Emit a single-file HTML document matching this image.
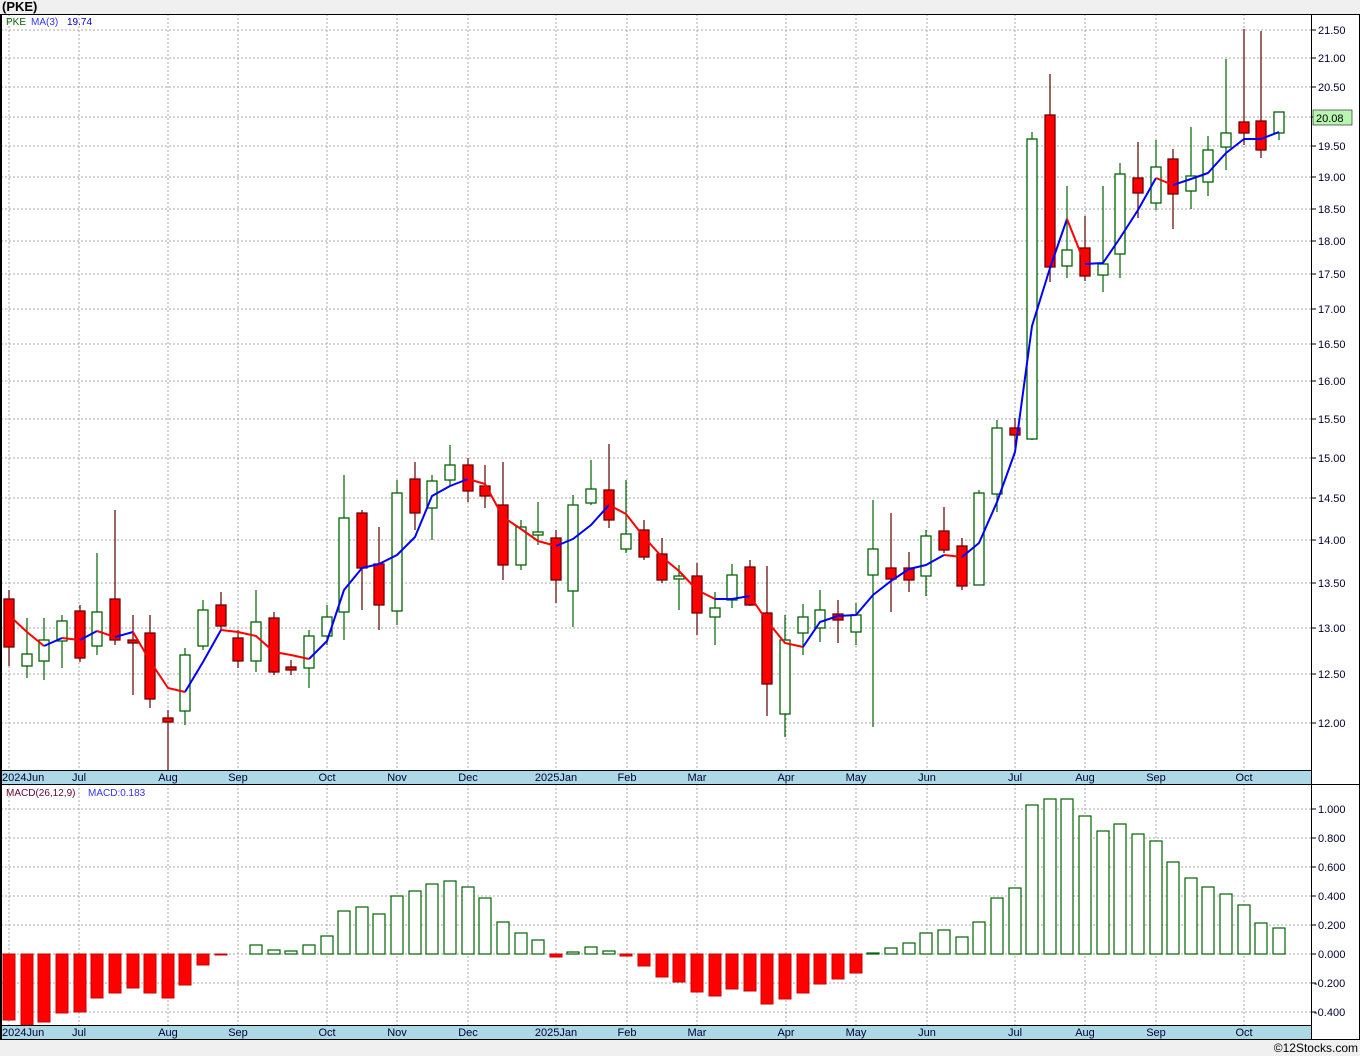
<!DOCTYPE html>
<html><head><meta charset="utf-8"><style>
html,body{margin:0;padding:0;background:#f0f0f0;}
svg{display:block;font-family:"Liberation Sans","DejaVu Sans",sans-serif;}
.g line{stroke:#a8a8a8;stroke-dasharray:2,2;stroke-width:1}
.u line{stroke:#006400;stroke-width:1.2}
.u rect{fill:#fff;stroke:#006400;stroke-width:1.3}
.d line{stroke:#600000;stroke-width:1.2}
.d rect{fill:#ff0000;stroke:#700000;stroke-width:1.3}
.ax text{font-size:11px;fill:#000033}
.mb rect.p{fill:#fff;stroke:#006400;stroke-width:1.2}
.mb rect.n{fill:#ff0000;stroke:#cc0000;stroke-width:1}
</style></head><body>
<svg width="1360" height="1056" viewBox="0 0 1360 1056" xmlns="http://www.w3.org/2000/svg">
<rect width="1360" height="1056" fill="#f0f0f0"/>
<text x="2" y="11" font-size="13" font-weight="bold" fill="#000">(PKE)</text>
<rect x="1" y="14" width="1310" height="756" fill="#fff"/>
<rect x="1" y="784" width="1310" height="241" fill="#fff"/>
<rect x="1311" y="14" width="49" height="1026" fill="#fff"/>
<rect x="1" y="770" width="1310" height="14" fill="#add8e6"/>
<rect x="1" y="1025" width="1310" height="14" fill="#add8e6"/>
<g class="g">
<line x1="1" x2="1311" y1="30" y2="30"/><line x1="1" x2="1311" y1="58" y2="58"/><line x1="1" x2="1311" y1="87" y2="87"/><line x1="1" x2="1311" y1="117" y2="117"/><line x1="1" x2="1311" y1="146" y2="146"/><line x1="1" x2="1311" y1="177" y2="177"/><line x1="1" x2="1311" y1="209" y2="209"/><line x1="1" x2="1311" y1="241" y2="241"/><line x1="1" x2="1311" y1="274" y2="274"/><line x1="1" x2="1311" y1="309" y2="309"/><line x1="1" x2="1311" y1="344" y2="344"/><line x1="1" x2="1311" y1="381" y2="381"/><line x1="1" x2="1311" y1="419" y2="419"/><line x1="1" x2="1311" y1="458" y2="458"/><line x1="1" x2="1311" y1="498" y2="498"/><line x1="1" x2="1311" y1="540" y2="540"/><line x1="1" x2="1311" y1="583" y2="583"/><line x1="1" x2="1311" y1="628" y2="628"/><line x1="1" x2="1311" y1="674" y2="674"/><line x1="1" x2="1311" y1="723" y2="723"/>
<line x1="1" x2="1311" y1="809" y2="809"/><line x1="1" x2="1311" y1="838" y2="838"/><line x1="1" x2="1311" y1="867" y2="867"/><line x1="1" x2="1311" y1="896" y2="896"/><line x1="1" x2="1311" y1="925" y2="925"/><line x1="1" x2="1311" y1="954" y2="954"/><line x1="1" x2="1311" y1="983" y2="983"/><line x1="1" x2="1311" y1="1012" y2="1012"/>
<line x1="9" x2="9" y1="14" y2="770"/><line x1="79" x2="79" y1="14" y2="770"/><line x1="168" x2="168" y1="14" y2="770"/><line x1="238" x2="238" y1="14" y2="770"/><line x1="327" x2="327" y1="14" y2="770"/><line x1="397" x2="397" y1="14" y2="770"/><line x1="468" x2="468" y1="14" y2="770"/><line x1="556" x2="556" y1="14" y2="770"/><line x1="627" x2="627" y1="14" y2="770"/><line x1="697" x2="697" y1="14" y2="770"/><line x1="786" x2="786" y1="14" y2="770"/><line x1="856" x2="856" y1="14" y2="770"/><line x1="927" x2="927" y1="14" y2="770"/><line x1="1015" x2="1015" y1="14" y2="770"/><line x1="1085" x2="1085" y1="14" y2="770"/><line x1="1156" x2="1156" y1="14" y2="770"/><line x1="1244" x2="1244" y1="14" y2="770"/>
<line x1="9" x2="9" y1="784" y2="1025"/><line x1="79" x2="79" y1="784" y2="1025"/><line x1="168" x2="168" y1="784" y2="1025"/><line x1="238" x2="238" y1="784" y2="1025"/><line x1="327" x2="327" y1="784" y2="1025"/><line x1="397" x2="397" y1="784" y2="1025"/><line x1="468" x2="468" y1="784" y2="1025"/><line x1="556" x2="556" y1="784" y2="1025"/><line x1="627" x2="627" y1="784" y2="1025"/><line x1="697" x2="697" y1="784" y2="1025"/><line x1="786" x2="786" y1="784" y2="1025"/><line x1="856" x2="856" y1="784" y2="1025"/><line x1="927" x2="927" y1="784" y2="1025"/><line x1="1015" x2="1015" y1="784" y2="1025"/><line x1="1085" x2="1085" y1="784" y2="1025"/><line x1="1156" x2="1156" y1="784" y2="1025"/><line x1="1244" x2="1244" y1="784" y2="1025"/>
</g>
<g class="d"><line x1="9" x2="9" y1="590" y2="666"/><rect x="4" y="599" width="10" height="48"/></g>
<g class="u"><line x1="27" x2="27" y1="618" y2="678"/><rect x="22" y="654" width="10" height="12"/></g>
<g class="u"><line x1="44" x2="44" y1="618" y2="680"/><rect x="39" y="640" width="10" height="21"/></g>
<g class="u"><line x1="62" x2="62" y1="615" y2="668"/><rect x="57" y="621" width="10" height="20"/></g>
<g class="d"><line x1="80" x2="80" y1="605" y2="662"/><rect x="75" y="611" width="10" height="47"/></g>
<g class="u"><line x1="97" x2="97" y1="553" y2="655"/><rect x="92" y="612" width="10" height="34"/></g>
<g class="d"><line x1="115" x2="115" y1="510" y2="645"/><rect x="110" y="599" width="10" height="41"/></g>
<g class="d"><line x1="133" x2="133" y1="615" y2="695"/><rect x="128" y="640" width="10" height="3"/></g>
<g class="d"><line x1="150" x2="150" y1="615" y2="708"/><rect x="145" y="633" width="10" height="66"/></g>
<g class="d"><line x1="168" x2="168" y1="710" y2="770"/><rect x="163" y="718" width="10" height="4"/></g>
<g class="u"><line x1="185" x2="185" y1="648" y2="725"/><rect x="180" y="655" width="10" height="56"/></g>
<g class="u"><line x1="203" x2="203" y1="600" y2="650"/><rect x="198" y="610" width="10" height="36"/></g>
<g class="d"><line x1="221" x2="221" y1="592" y2="630"/><rect x="216" y="605" width="10" height="21"/></g>
<g class="d"><line x1="238" x2="238" y1="630" y2="668"/><rect x="233" y="638" width="10" height="23"/></g>
<g class="u"><line x1="256" x2="256" y1="590" y2="672"/><rect x="251" y="622" width="10" height="39"/></g>
<g class="d"><line x1="274" x2="274" y1="612" y2="675"/><rect x="269" y="618" width="10" height="54"/></g>
<g class="d"><line x1="291" x2="291" y1="660" y2="675"/><rect x="286" y="667" width="10" height="3"/></g>
<g class="u"><line x1="309" x2="309" y1="630" y2="688"/><rect x="304" y="636" width="10" height="32"/></g>
<g class="u"><line x1="327" x2="327" y1="605" y2="645"/><rect x="322" y="617" width="10" height="19"/></g>
<g class="u"><line x1="344" x2="344" y1="475" y2="640"/><rect x="339" y="518" width="10" height="94"/></g>
<g class="d"><line x1="362" x2="362" y1="510" y2="610"/><rect x="357" y="513" width="10" height="55"/></g>
<g class="d"><line x1="379" x2="379" y1="527" y2="630"/><rect x="374" y="564" width="10" height="41"/></g>
<g class="u"><line x1="397" x2="397" y1="480" y2="625"/><rect x="392" y="493" width="10" height="118"/></g>
<g class="d"><line x1="415" x2="415" y1="462" y2="530"/><rect x="410" y="479" width="10" height="34"/></g>
<g class="u"><line x1="432" x2="432" y1="475" y2="540"/><rect x="427" y="481" width="10" height="27"/></g>
<g class="u"><line x1="450" x2="450" y1="445" y2="485"/><rect x="445" y="465" width="10" height="15"/></g>
<g class="d"><line x1="468" x2="468" y1="458" y2="502"/><rect x="463" y="465" width="10" height="26"/></g>
<g class="d"><line x1="485" x2="485" y1="465" y2="508"/><rect x="480" y="486" width="10" height="10"/></g>
<g class="d"><line x1="503" x2="503" y1="462" y2="580"/><rect x="498" y="505" width="10" height="60"/></g>
<g class="u"><line x1="521" x2="521" y1="520" y2="570"/><rect x="516" y="527" width="10" height="38"/></g>
<g class="u"><line x1="538" x2="538" y1="502" y2="545"/><rect x="533" y="532" width="10" height="3"/></g>
<g class="d"><line x1="556" x2="556" y1="530" y2="603"/><rect x="551" y="538" width="10" height="42"/></g>
<g class="u"><line x1="573" x2="573" y1="495" y2="627"/><rect x="568" y="505" width="10" height="86"/></g>
<g class="u"><line x1="591" x2="591" y1="460" y2="505"/><rect x="586" y="489" width="10" height="14"/></g>
<g class="d"><line x1="609" x2="609" y1="444" y2="528"/><rect x="604" y="490" width="10" height="30"/></g>
<g class="u"><line x1="626" x2="626" y1="480" y2="553"/><rect x="621" y="534" width="10" height="15"/></g>
<g class="d"><line x1="644" x2="644" y1="520" y2="560"/><rect x="639" y="530" width="10" height="27"/></g>
<g class="d"><line x1="662" x2="662" y1="538" y2="583"/><rect x="657" y="554" width="10" height="26"/></g>
<g class="u"><line x1="679" x2="679" y1="565" y2="610"/><rect x="674" y="576" width="10" height="3"/></g>
<g class="d"><line x1="697" x2="697" y1="563" y2="635"/><rect x="692" y="576" width="10" height="37"/></g>
<g class="u"><line x1="715" x2="715" y1="592" y2="645"/><rect x="710" y="608" width="10" height="9"/></g>
<g class="u"><line x1="732" x2="732" y1="564" y2="608"/><rect x="727" y="575" width="10" height="25"/></g>
<g class="d"><line x1="750" x2="750" y1="560" y2="606"/><rect x="745" y="567" width="10" height="38"/></g>
<g class="d"><line x1="767" x2="767" y1="566" y2="716"/><rect x="762" y="613" width="10" height="71"/></g>
<g class="u"><line x1="785" x2="785" y1="615" y2="737"/><rect x="780" y="640" width="10" height="74"/></g>
<g class="u"><line x1="803" x2="803" y1="604" y2="655"/><rect x="798" y="617" width="10" height="16"/></g>
<g class="u"><line x1="820" x2="820" y1="590" y2="642"/><rect x="815" y="610" width="10" height="18"/></g>
<g class="d"><line x1="838" x2="838" y1="600" y2="643"/><rect x="833" y="614" width="10" height="6"/></g>
<g class="u"><line x1="856" x2="856" y1="603" y2="645"/><rect x="851" y="615" width="10" height="17"/></g>
<g class="u"><line x1="873" x2="873" y1="500" y2="727"/><rect x="868" y="549" width="10" height="26"/></g>
<g class="d"><line x1="891" x2="891" y1="513" y2="612"/><rect x="886" y="568" width="10" height="11"/></g>
<g class="d"><line x1="909" x2="909" y1="552" y2="592"/><rect x="904" y="568" width="10" height="12"/></g>
<g class="u"><line x1="926" x2="926" y1="530" y2="596"/><rect x="921" y="536" width="10" height="40"/></g>
<g class="d"><line x1="944" x2="944" y1="507" y2="553"/><rect x="939" y="531" width="10" height="19"/></g>
<g class="d"><line x1="962" x2="962" y1="538" y2="590"/><rect x="957" y="546" width="10" height="40"/></g>
<g class="u"><line x1="979" x2="979" y1="490" y2="585"/><rect x="974" y="493" width="10" height="92"/></g>
<g class="u"><line x1="997" x2="997" y1="420" y2="512"/><rect x="992" y="428" width="10" height="66"/></g>
<g class="d"><line x1="1015" x2="1015" y1="418" y2="448"/><rect x="1010" y="428" width="10" height="7"/></g>
<g class="u"><line x1="1032" x2="1032" y1="132" y2="440"/><rect x="1027" y="139" width="10" height="300"/></g>
<g class="d"><line x1="1050" x2="1050" y1="74" y2="282"/><rect x="1045" y="115" width="10" height="152"/></g>
<g class="u"><line x1="1067" x2="1067" y1="186" y2="278"/><rect x="1062" y="250" width="10" height="16"/></g>
<g class="d"><line x1="1085" x2="1085" y1="216" y2="281"/><rect x="1080" y="248" width="10" height="28"/></g>
<g class="u"><line x1="1103" x2="1103" y1="186" y2="292"/><rect x="1098" y="264" width="10" height="11"/></g>
<g class="u"><line x1="1120" x2="1120" y1="163" y2="278"/><rect x="1115" y="174" width="10" height="80"/></g>
<g class="d"><line x1="1138" x2="1138" y1="142" y2="218"/><rect x="1133" y="178" width="10" height="15"/></g>
<g class="u"><line x1="1156" x2="1156" y1="140" y2="210"/><rect x="1151" y="167" width="10" height="36"/></g>
<g class="d"><line x1="1173" x2="1173" y1="149" y2="229"/><rect x="1168" y="159" width="10" height="35"/></g>
<g class="u"><line x1="1191" x2="1191" y1="127" y2="209"/><rect x="1186" y="176" width="10" height="15"/></g>
<g class="u"><line x1="1208" x2="1208" y1="136" y2="196"/><rect x="1203" y="150" width="10" height="32"/></g>
<g class="u"><line x1="1226" x2="1226" y1="59" y2="170"/><rect x="1221" y="133" width="10" height="14"/></g>
<g class="d"><line x1="1244" x2="1244" y1="29" y2="145"/><rect x="1239" y="122" width="10" height="11"/></g>
<g class="d"><line x1="1261" x2="1261" y1="31" y2="158"/><rect x="1256" y="121" width="10" height="29"/></g>
<g class="u"><line x1="1279" x2="1279" y1="112" y2="140"/><rect x="1274" y="112" width="10" height="21"/></g>
<g fill="none" stroke-width="2" stroke-linejoin="round">
<polyline stroke="#ff0000" points="13,619 27,632 44,646"/>
<polyline stroke="#0000ff" points="44,646 62,638"/>
<polyline stroke="#ff0000" points="62,638 80,640"/>
<polyline stroke="#0000ff" points="80,640 97,631"/>
<polyline stroke="#ff0000" points="97,631 115,637"/>
<polyline stroke="#0000ff" points="115,637 133,632"/>
<polyline stroke="#ff0000" points="133,632 150,661 168,688 185,692"/>
<polyline stroke="#0000ff" points="185,692 203,662 221,630"/>
<polyline stroke="#ff0000" points="221,630 238,632 256,636 274,652 291,655 309,659"/>
<polyline stroke="#0000ff" points="309,659 327,641 344,590 362,568 379,564 397,555 415,537 432,496 450,486 468,479"/>
<polyline stroke="#ff0000" points="468,479 485,484 503,517 521,529 538,541 556,546"/>
<polyline stroke="#0000ff" points="556,546 573,539 591,525 609,505"/>
<polyline stroke="#ff0000" points="609,505 626,514 644,537 662,557 679,571 697,590 715,599"/>
<polyline stroke="#0000ff" points="715,599 732,599 750,596"/>
<polyline stroke="#ff0000" points="750,596 767,621 785,643 803,647"/>
<polyline stroke="#0000ff" points="803,647 820,622 838,616 856,615 873,595 891,581 909,569 926,565 944,555"/>
<polyline stroke="#ff0000" points="944,555 962,557"/>
<polyline stroke="#0000ff" points="962,557 979,543 997,502 1015,452 1032,326 1050,268 1067,219"/>
<polyline stroke="#ff0000" points="1067,219 1085,264"/>
<polyline stroke="#0000ff" points="1085,264 1103,263 1120,238 1138,210 1156,178"/>
<polyline stroke="#ff0000" points="1156,178 1173,185"/>
<polyline stroke="#0000ff" points="1173,185 1191,179 1208,173 1226,153 1244,139 1261,139 1279,132"/>
</g>
<g class="mb">
<rect class="n" x="3" y="954" width="12" height="66"/><rect class="n" x="21" y="954" width="12" height="71"/><rect class="n" x="38" y="954" width="12" height="68"/><rect class="n" x="56" y="954" width="12" height="59"/><rect class="n" x="74" y="954" width="12" height="58"/><rect class="n" x="91" y="954" width="12" height="44"/><rect class="n" x="109" y="954" width="12" height="39"/><rect class="n" x="127" y="954" width="12" height="34"/><rect class="n" x="144" y="954" width="12" height="39"/><rect class="n" x="162" y="954" width="12" height="44"/><rect class="n" x="179" y="954" width="12" height="31"/><rect class="n" x="197" y="954" width="12" height="11"/><rect class="n" x="215" y="954" width="12" height="1"/>
<rect class="p" x="250" y="945" width="12" height="9"/><rect class="p" x="268" y="950" width="12" height="4"/><rect class="p" x="285" y="951" width="12" height="3"/><rect class="p" x="303" y="945" width="12" height="9"/><rect class="p" x="321" y="936" width="12" height="18"/><rect class="p" x="338" y="911" width="12" height="43"/><rect class="p" x="356" y="907" width="12" height="47"/><rect class="p" x="373" y="914" width="12" height="40"/><rect class="p" x="391" y="896" width="12" height="58"/><rect class="p" x="409" y="891" width="12" height="63"/><rect class="p" x="426" y="884" width="12" height="70"/><rect class="p" x="444" y="881" width="12" height="73"/><rect class="p" x="462" y="887" width="12" height="67"/><rect class="p" x="479" y="898" width="12" height="56"/><rect class="p" x="497" y="922" width="12" height="32"/><rect class="p" x="515" y="933" width="12" height="21"/><rect class="p" x="532" y="940" width="12" height="14"/>
<rect class="n" x="550" y="954" width="12" height="3"/><rect class="p" x="567" y="952" width="12" height="2"/><rect class="p" x="585" y="947" width="12" height="7"/><rect class="p" x="603" y="951" width="12" height="3"/><rect class="n" x="620" y="954" width="12" height="2"/><rect class="n" x="638" y="954" width="12" height="12"/><rect class="n" x="656" y="954" width="12" height="23"/><rect class="n" x="673" y="954" width="12" height="28"/><rect class="n" x="691" y="954" width="12" height="38"/><rect class="n" x="709" y="954" width="12" height="42"/><rect class="n" x="726" y="954" width="12" height="35"/><rect class="n" x="744" y="954" width="12" height="37"/><rect class="n" x="761" y="954" width="12" height="50"/><rect class="n" x="779" y="954" width="12" height="45"/><rect class="n" x="797" y="954" width="12" height="39"/><rect class="n" x="814" y="954" width="12" height="30"/><rect class="n" x="832" y="954" width="12" height="25"/><rect class="n" x="850" y="954" width="12" height="19"/>
<rect class="p" x="867" y="953" width="12" height="1"/><rect class="p" x="885" y="948" width="12" height="6"/><rect class="p" x="903" y="943" width="12" height="11"/><rect class="p" x="920" y="933" width="12" height="21"/><rect class="p" x="938" y="930" width="12" height="24"/><rect class="p" x="956" y="937" width="12" height="17"/><rect class="p" x="973" y="922" width="12" height="32"/><rect class="p" x="991" y="898" width="12" height="56"/><rect class="p" x="1009" y="888" width="12" height="66"/><rect class="p" x="1026" y="805" width="12" height="149"/><rect class="p" x="1044" y="799" width="12" height="155"/><rect class="p" x="1061" y="799" width="12" height="155"/><rect class="p" x="1079" y="816" width="12" height="138"/><rect class="p" x="1097" y="831" width="12" height="123"/><rect class="p" x="1114" y="824" width="12" height="130"/><rect class="p" x="1132" y="834" width="12" height="120"/><rect class="p" x="1150" y="841" width="12" height="113"/><rect class="p" x="1167" y="862" width="12" height="92"/><rect class="p" x="1185" y="878" width="12" height="76"/><rect class="p" x="1202" y="887" width="12" height="67"/><rect class="p" x="1220" y="894" width="12" height="60"/><rect class="p" x="1238" y="905" width="12" height="49"/><rect class="p" x="1255" y="923" width="12" height="31"/><rect class="p" x="1273" y="928" width="12" height="26"/>
</g>
<g stroke="#000" stroke-width="1" fill="none">
<rect x="1.5" y="14.5" width="1358" height="1025"/>
<line x1="1311.5" y1="14" x2="1311.5" y2="1040"/>
<line x1="1" y1="770.5" x2="1311" y2="770.5"/>
<line x1="1" y1="784.5" x2="1360" y2="784.5"/>
<line x1="1" y1="1025.5" x2="1311" y2="1025.5"/>
</g>
<line x1="1" y1="14" x2="1" y2="1040" stroke="#000" stroke-width="2"/>
<g stroke="#000" stroke-width="1">
<line x1="1311" x2="1316" y1="30" y2="30"/><line x1="1311" x2="1316" y1="58" y2="58"/><line x1="1311" x2="1316" y1="87" y2="87"/><line x1="1311" x2="1316" y1="117" y2="117"/><line x1="1311" x2="1316" y1="146" y2="146"/><line x1="1311" x2="1316" y1="177" y2="177"/><line x1="1311" x2="1316" y1="209" y2="209"/><line x1="1311" x2="1316" y1="241" y2="241"/><line x1="1311" x2="1316" y1="274" y2="274"/><line x1="1311" x2="1316" y1="309" y2="309"/><line x1="1311" x2="1316" y1="344" y2="344"/><line x1="1311" x2="1316" y1="381" y2="381"/><line x1="1311" x2="1316" y1="419" y2="419"/><line x1="1311" x2="1316" y1="458" y2="458"/><line x1="1311" x2="1316" y1="498" y2="498"/><line x1="1311" x2="1316" y1="540" y2="540"/><line x1="1311" x2="1316" y1="583" y2="583"/><line x1="1311" x2="1316" y1="628" y2="628"/><line x1="1311" x2="1316" y1="674" y2="674"/><line x1="1311" x2="1316" y1="723" y2="723"/>
<line x1="1311" x2="1316" y1="809" y2="809"/><line x1="1311" x2="1316" y1="838" y2="838"/><line x1="1311" x2="1316" y1="867" y2="867"/><line x1="1311" x2="1316" y1="896" y2="896"/><line x1="1311" x2="1316" y1="925" y2="925"/><line x1="1311" x2="1316" y1="954" y2="954"/><line x1="1311" x2="1316" y1="983" y2="983"/><line x1="1311" x2="1316" y1="1012" y2="1012"/>
</g>
<g class="ax">
<text x="1318" y="34">21.50</text><text x="1318" y="62">21.00</text><text x="1318" y="91">20.50</text><text x="1318" y="150">19.50</text><text x="1318" y="181">19.00</text><text x="1318" y="213">18.50</text><text x="1318" y="245">18.00</text><text x="1318" y="278">17.50</text><text x="1318" y="313">17.00</text><text x="1318" y="348">16.50</text><text x="1318" y="385">16.00</text><text x="1318" y="423">15.50</text><text x="1318" y="462">15.00</text><text x="1318" y="502">14.50</text><text x="1318" y="544">14.00</text><text x="1318" y="587">13.50</text><text x="1318" y="632">13.00</text><text x="1318" y="678">12.50</text><text x="1318" y="727">12.00</text>
<text x="1318" y="813">1.000</text><text x="1318" y="842">0.800</text><text x="1318" y="871">0.600</text><text x="1318" y="900">0.400</text><text x="1318" y="929">0.200</text><text x="1318" y="958">0.000</text><text x="1314" y="987">-0.200</text><text x="1314" y="1016">-0.400</text>
</g>
<rect x="1313" y="110" width="39" height="15" fill="#b8f5b0" stroke="#333" stroke-width="0.7"/>
<text x="1316" y="122" font-size="11" fill="#000">20.08</text>
<g font-size="11" fill="#000033" text-anchor="middle">
<text x="2" y="781" text-anchor="start">2024Jun</text><text x="79" y="781">Jul</text><text x="168" y="781">Aug</text><text x="238" y="781">Sep</text><text x="327" y="781">Oct</text><text x="397" y="781">Nov</text><text x="468" y="781">Dec</text><text x="556" y="781">2025Jan</text><text x="627" y="781">Feb</text><text x="697" y="781">Mar</text><text x="786" y="781">Apr</text><text x="856" y="781">May</text><text x="927" y="781">Jun</text><text x="1015" y="781">Jul</text><text x="1085" y="781">Aug</text><text x="1156" y="781">Sep</text><text x="1244" y="781">Oct</text>
<text x="2" y="1036" text-anchor="start">2024Jun</text><text x="79" y="1036">Jul</text><text x="168" y="1036">Aug</text><text x="238" y="1036">Sep</text><text x="327" y="1036">Oct</text><text x="397" y="1036">Nov</text><text x="468" y="1036">Dec</text><text x="556" y="1036">2025Jan</text><text x="627" y="1036">Feb</text><text x="697" y="1036">Mar</text><text x="786" y="1036">Apr</text><text x="856" y="1036">May</text><text x="927" y="1036">Jun</text><text x="1015" y="1036">Jul</text><text x="1085" y="1036">Aug</text><text x="1156" y="1036">Sep</text><text x="1244" y="1036">Oct</text>
</g>
<text x="6" y="25" font-size="10" fill="#006400">PKE</text>
<text x="31" y="25" font-size="10" fill="#3333ff">MA(3)</text>
<text x="67" y="25" font-size="10" fill="#0000cc">19.74</text>
<text x="6" y="796" font-size="10" fill="#660033">MACD(26,12,9)</text>
<text x="88" y="796" font-size="10" fill="#3333ff">MACD:0.183</text>
<text x="1358" y="1052" font-size="12" fill="#000" text-anchor="end">©12Stocks.com</text>
</svg>
</body></html>
